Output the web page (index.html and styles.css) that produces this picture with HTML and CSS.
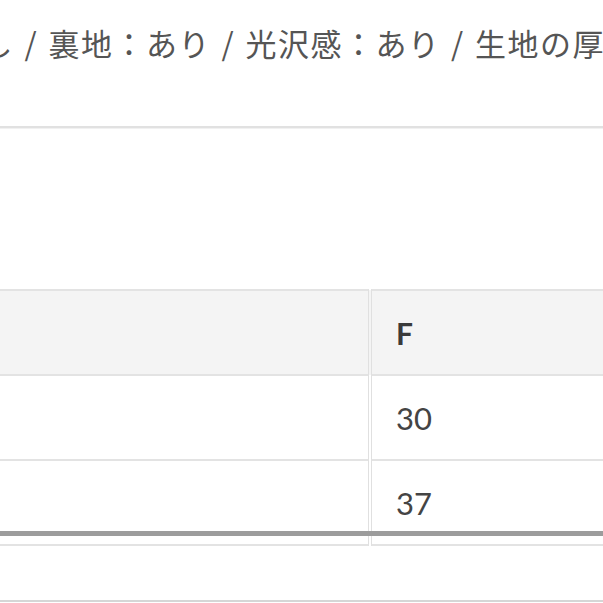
FILE: index.html
```html
<!DOCTYPE html>
<html lang="ja">
<head>
<meta charset="utf-8">
<link rel="stylesheet" href="styles.css">
</head>
<body>
<div class="page">
  <p class="spec">なし / 裏地：あり / 光沢感：あり / 生地の厚み：普通</p>
  <hr class="rule">
  <div class="table-wrap">
    <table class="size-table">
      <tr class="head"><th class="label"></th><th class="val">F</th></tr>
      <tr><td class="label"></td><td class="val">30</td></tr>
      <tr><td class="label"></td><td class="val">37</td></tr>
    </table>
    <div class="scrollbar"></div>
  </div>
  <hr class="rule bottom">
</div>
</body>
</html>
```

FILE: styles.css
```css
html, body {
  margin: 0;
  padding: 0;
  background: #ffffff;
}
.page {
  width: 603px;
  overflow: hidden;
}
.spec {
  margin: 0;
  padding-top: 21px;
  height: 44px;
  line-height: 44px;
  font-family: "Noto Sans CJK JP", "Noto Sans", sans-serif;
  font-size: 31px;
  font-weight: 400;
  color: #555555;
  white-space: nowrap;
  letter-spacing: 1.5px;
  word-spacing: 2px;
  text-indent: -51px;
}
.rule {
  margin: 61px 0 0 0;
  border: 0;
  border-top: 2px solid #e1e1e1;
  border-bottom: 1px solid #f1f1f1;
  height: 0;
}
.table-wrap {
  position: relative;
  margin-top: 160px;
}
.size-table {
  border-collapse: collapse;
  width: 620px;
  font-family: Lato, "Open Sans", sans-serif;
}
.size-table th, .size-table td {
  height: 83px;
  border-top: 2px solid #e3e3e3;
  padding: 0 0 0 24px;
  text-align: left;
  vertical-align: middle;
}
.size-table .label {
  width: 344px;
  border-right: 4px double #e0e0e0;
}
.head th {
  background: #f4f4f4;
  font-size: 30px;
  font-weight: 700;
  color: #3a3a3a;
}
.size-table td.val {
  font-size: 31px;
  font-weight: 400;
  color: #444444;
}
.size-table tr:last-child td {
  border-bottom: 2px solid #e3e3e3;
}
.scrollbar {
  position: absolute;
  left: 0;
  right: 0;
  top: 242px;
  height: 5px;
  background: #9c9c9c;
}
.rule.bottom {
  margin-top: 54px;
  border-top: 2px solid #d6d6d6;
  border-bottom: 0;
}
```
